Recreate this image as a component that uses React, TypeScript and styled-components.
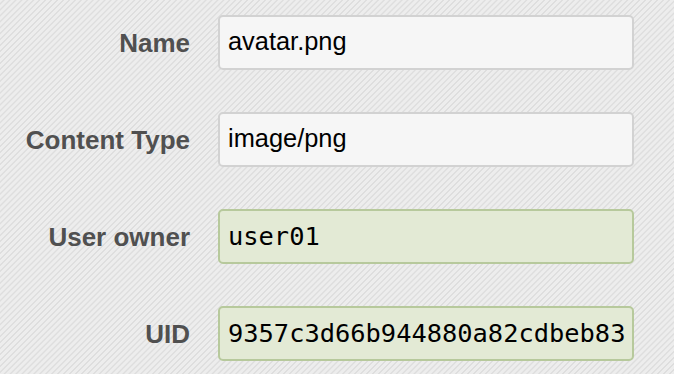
import styled, { createGlobalStyle } from 'styled-components'

const GlobalStyle = createGlobalStyle`
  html, body {
    margin: 0;
    padding: 0;
  }

  body {
    width: 674px;
    height: 374px;
    overflow: hidden;
    background-color: #ebebeb;
    background-image: repeating-linear-gradient(
      -45deg,
      #ededed 0px,
      #ededed 2.2px,
      #dedede 2.8px,
      #dedede 3.6px,
      #ededed 4.2px
    );
    font-family: 'Liberation Sans', Arial, sans-serif;
  }
`

type Field = {
  label: string
  value: string
  readOnly?: boolean
}

const fields: Field[] = [
  { label: 'Name', value: 'avatar.png' },
  { label: 'Content Type', value: 'image/png' },
  { label: 'User owner', value: 'user01', readOnly: true },
  { label: 'UID', value: '9357c3d66b944880a82cdbeb83', readOnly: true },
]

export default function App() {
  return (
    <>
      <GlobalStyle />
      <Form>
        {fields.map((f) => (
          <Row key={f.label}>
            <Label>{f.label}</Label>
            <Value $readOnly={f.readOnly}>{f.value}</Value>
          </Row>
        ))}
      </Form>
    </>
  )
}

const Form = styled.div`
  display: flex;
  flex-direction: column;
  gap: 42px;
  padding-top: 15px;
`

const Row = styled.div`
  display: grid;
  grid-template-columns: 190px 416px;
  column-gap: 28px;
  align-items: center;
`

const Label = styled.div`
  text-align: right;
  font-size: 26px;
  font-weight: bold;
  color: #505050;
  padding-top: 1px;
`

const Value = styled.div<{ $readOnly?: boolean }>`
  box-sizing: border-box;
  height: 55px;
  display: flex;
  align-items: center;
  padding: 0 8px 2px;
  border-radius: 5px;
  border: 2px solid ${(p) => (p.$readOnly ? '#b7c99c' : '#d2d2d2')};
  background: ${(p) => (p.$readOnly ? '#e3ead5' : '#f6f6f6')};
  color: #000;
  font-family: ${(p) =>
    p.$readOnly
      ? "'DejaVu Sans Mono', 'Liberation Mono', monospace"
      : "'Liberation Sans', Arial, sans-serif"};
  font-size: 25.4px;
  white-space: nowrap;
  overflow: hidden;
`
